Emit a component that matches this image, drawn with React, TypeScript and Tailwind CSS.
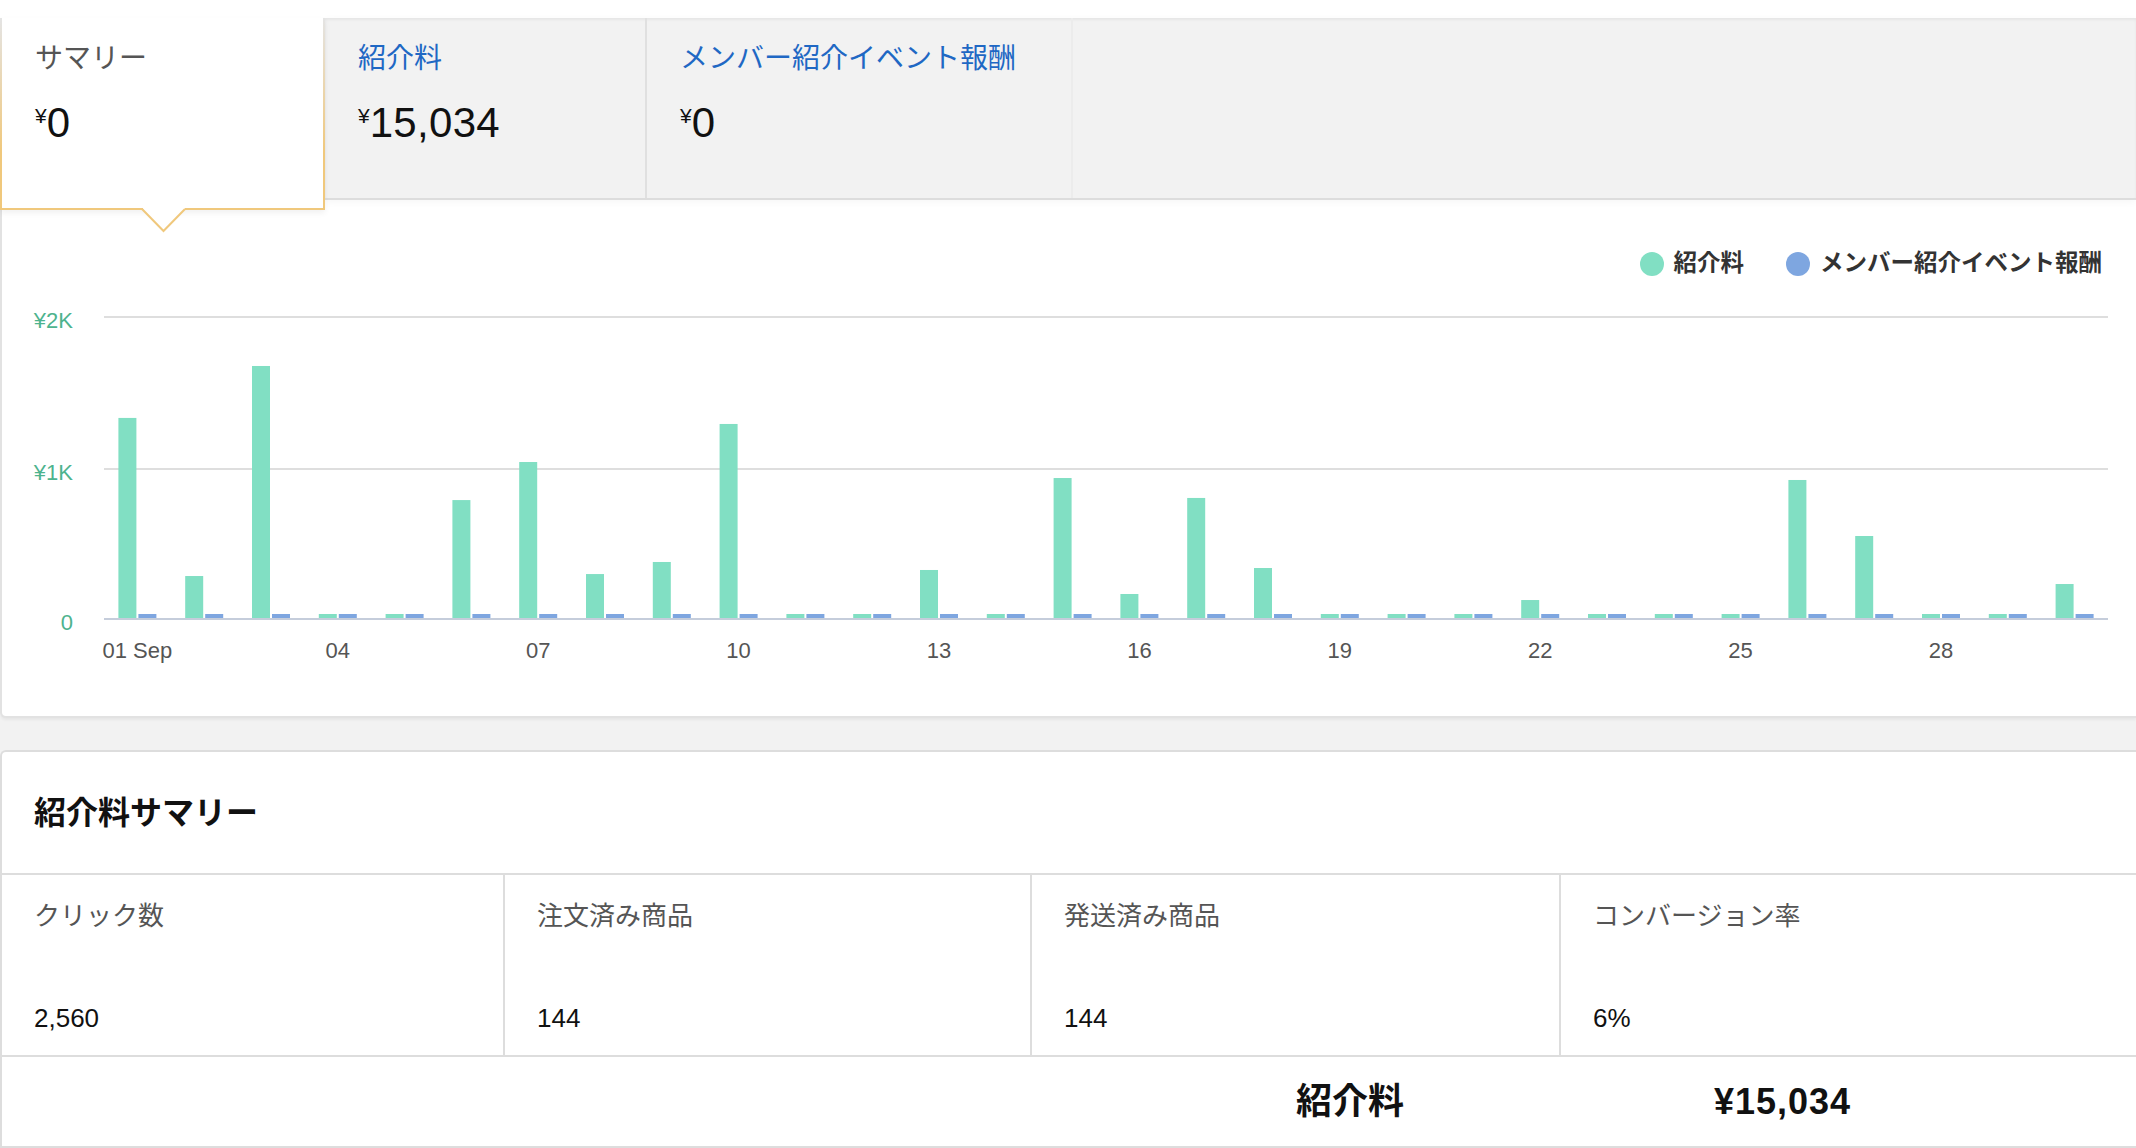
import React from "react";

const GREEN = [1325, 278, 1669, 0, 0, 781, 1033, 291, 371, 1285, 0, 0, 318, 0, 927, 159, 795, 331, 0, 0, 0, 119, 0, 0, 0, 914, 543, 0, 0, 225];
const BLUE = GREEN.map(() => 0);

const X0 = 104;
const PLOT_W = 2004;
const BAND = PLOT_W / 30;
const BASE = 328; // svg y of bar bottoms
const PX_PER_YEN = 0.151;
const MIN_H = 4;

function Money({ v }: { v: string }) {
  return (
    <div className="mt-[29px] flex items-start text-[#111111]">
      <span className="mt-[3px] text-[21px] leading-none">¥</span>
      <span className="text-[42px] leading-none tracking-[0.3px]">{v}</span>
    </div>
  );
}

function Chart() {
  const ticks = [0, 3, 6, 9, 12, 15, 18, 21, 24, 27];
  return (
    <svg
      width={2134}
      height={380}
      viewBox="2 0 2134 380"
      className="mt-[14px] block font-['Liberation_Sans',sans-serif]"
    >
      <line x1={X0} x2={X0 + PLOT_W} y1={27} y2={27} stroke="#dedede" strokeWidth={2} />
      <line x1={X0} x2={X0 + PLOT_W} y1={179} y2={179} stroke="#dedede" strokeWidth={2} />
      <text x={73} y={38} textAnchor="end" fontSize={22} fill="#4db38e">¥2K</text>
      <text x={73} y={190} textAnchor="end" fontSize={22} fill="#4db38e">¥1K</text>
      <text x={73} y={340} textAnchor="end" fontSize={22} fill="#4db38e">0</text>
      {GREEN.map((g, i) => {
        const c = X0 + (i + 0.5) * BAND;
        const gh = Math.max(MIN_H, g * PX_PER_YEN);
        const bh = Math.max(MIN_H, BLUE[i] * PX_PER_YEN);
        return (
          <g key={i}>
            <rect x={c - 19} y={BASE - gh} width={18} height={gh} fill="#81dfc3" />
            <rect x={c + 1} y={BASE - bh} width={18} height={bh} fill="#7ea6e0" />
          </g>
        );
      })}
      <line x1={X0} x2={X0 + PLOT_W} y1={329} y2={329} stroke="#c5cddb" strokeWidth={2} />
      {ticks.map((i) => (
        <text
          key={i}
          x={X0 + (i + 0.5) * BAND}
          y={368}
          textAnchor="middle"
          fontSize={22}
          fill="#555555"
        >
          {i === 0 ? "01 Sep" : String(i + 1).padStart(2, "0")}
        </text>
      ))}
    </svg>
  );
}

export default function App() {
  const cells = [
    { label: "クリック数", value: "2,560", w: "w-[503px] border-r-2" },
    { label: "注文済み商品", value: "144", w: "w-[527px] border-r-2" },
    { label: "発送済み商品", value: "144", w: "w-[529px] border-r-2" },
    { label: "コンバージョン率", value: "6%", w: "flex-1" },
  ];
  return (
    <div className="h-[1148px] w-[2136px] overflow-hidden bg-[#f2f2f2] font-['Liberation_Sans','Noto_Sans_CJK_JP',sans-serif]">
      {/* Tabs */}
      <div className="bg-white pt-[18px]">
        <div className="flex items-start">
          <div className="relative z-20 -mb-[10px] h-[192px] w-[325px] bg-[linear-gradient(to_bottom,#e4e4e4,#f0c87c_70%)] px-[2px] pb-[2px] shadow-[0_3px_6px_rgba(0,0,0,0.06)]">
            <div className="h-full bg-white pl-[33px] pt-[27px]">
              <div className="text-[28px] leading-none text-[#555555]">サマリー</div>
              <Money v="0" />
            </div>
            <svg
              className="absolute left-[141px] top-[189px]"
              width={46}
              height={28}
              viewBox="0 0 46 28"
            >
              <polygon points="2,0 44,0 44,2 22.5,24 2,2" fill="#ffffff" />
              <polyline points="1,2 22.5,24 44,2" fill="none" stroke="#f0c87c" strokeWidth={2} />
            </svg>
          </div>
          <div className="relative z-10 flex h-[182px] flex-1 border-b-2 border-[#dddddd] bg-[#f2f2f2] shadow-[0_2px_8px_rgba(0,0,0,0.04),inset_0_2px_3px_rgba(0,0,0,0.05)]">
            <div className="w-[322px] border-r-2 border-[#e0e0e0] pl-[33px] pt-[27px]">
              <div className="text-[28px] leading-none text-[#1f68c4]">紹介料</div>
              <Money v="15,034" />
            </div>
            <div className="w-[426px] border-r-2 border-[#ececec] pl-[33px] pt-[27px]">
              <div className="text-[28px] leading-none text-[#1f68c4]">メンバー紹介イベント報酬</div>
              <Money v="0" />
            </div>
          </div>
        </div>
      </div>

      {/* Chart panel */}
      <div className="relative rounded-bl-[6px] border-b-2 border-l-2 border-[#e2e2e2] bg-white pb-[46px] pt-[52px] shadow-[0_2px_3px_rgba(0,0,0,0.05)]">
        <div className="flex items-center justify-end pr-[34px]">
          <span className="h-[24px] w-[24px] rounded-full bg-[#81dfc3]" />
          <span className="ml-[10px] text-[23.5px] font-bold leading-none text-[#333333]">紹介料</span>
          <span className="ml-[42px] h-[24px] w-[24px] rounded-full bg-[#7ea6e0]" />
          <span className="ml-[10px] text-[23.5px] font-bold leading-none text-[#333333]">メンバー紹介イベント報酬</span>
        </div>
        <Chart />
      </div>

      {/* Summary panel */}
      <div className="mt-[32px] rounded-tl-[6px] border-l-2 border-t-2 border-[#dddddd] bg-white">
        <div className="flex h-[123px] items-center border-b-2 border-[#dddddd] pl-[32px]">
          <h2 className="text-[32px] font-bold leading-none text-[#111111]">紹介料サマリー</h2>
        </div>
        <div className="flex h-[182px] border-b-2 border-[#dddddd]">
          {cells.map((c) => (
            <div key={c.label} className={`${c.w} border-[#dddddd] pl-[32px] pt-[28px]`}>
              <div className="text-[26px] leading-none text-[#555555]">{c.label}</div>
              <div className="mt-[76px] text-[26px] leading-none text-[#111111]">{c.value}</div>
            </div>
          ))}
        </div>
        <div className="flex h-[91px] items-center border-b-2 border-[#dddddd]">
          <div className="w-[1558px] pr-[156px] text-right text-[36px] font-bold leading-none text-[#111111]">紹介料</div>
          <div className="pl-[154px] text-[36px] font-bold leading-none tracking-[1px] text-[#111111]">¥15,034</div>
        </div>
      </div>
    </div>
  );
}
